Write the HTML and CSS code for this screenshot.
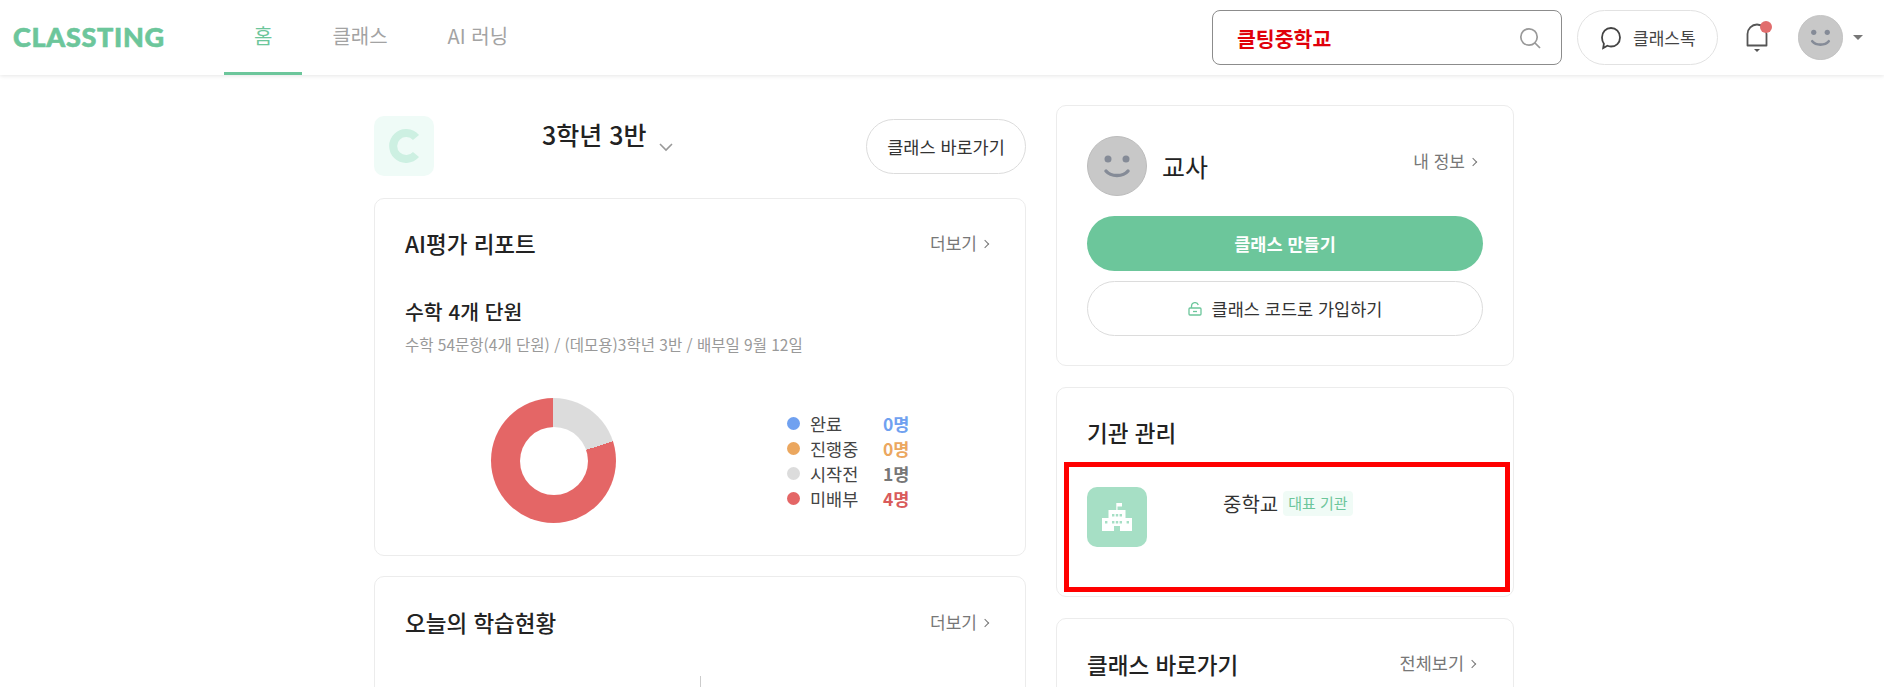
FILE: index.html
```html
<!DOCTYPE html>
<html lang="ko">
<head>
<meta charset="utf-8">
<title>Classting</title>
<link rel="stylesheet" href="styles.css">
</head>
<body>
<header class="topbar">
  <div class="logo">CLASSTING</div>
  <nav class="tabs">
    <a class="tab tab-active">홈</a>
    <a class="tab">클래스</a>
    <a class="tab">AI 러닝</a>
  </nav>
  <div class="top-actions">
    <div class="search">
      <span class="search-text">클팅중학교</span>
      <svg class="search-icon" width="22" height="22" viewBox="0 0 22 22" fill="none" stroke="#999" stroke-width="1.7"><circle cx="10" cy="10" r="8.2"/><path d="M16 16l5 5"/></svg>
    </div>
    <div class="talk">
      <svg width="22" height="24" viewBox="0 0 22 24" fill="none" stroke="#444" stroke-width="1.8"><path d="M11 2c5 0 9 4 9 9.500s-4 9-9 9c-1.300 0-2.500-.2-3.600-.7L3.200 22l.7-4.300C2.700 16 2 14 2 11.500 2 6 6 2 11 2z"/></svg>
      <span>클래스톡</span>
    </div>
    <div class="bell">
      <svg width="26" height="30" viewBox="0 0 26 30" fill="none" stroke="#555" stroke-width="1.800"><path d="M3.500 22.500h19V11a9.500 9.500 0 0 0-19 0z" stroke-linejoin="round"/><path d="M10 26h6l-3 3z" fill="#555" stroke="none"/></svg>
      <span class="bell-dot"></span>
    </div>
    <svg class="avatar-small" width="45" height="45" viewBox="0 0 60 60"><circle cx="30" cy="30" r="29.500" fill="#c8c8c8" stroke="#bcbcbc"/><circle cx="21" cy="23" r="3.500" fill="#858b97"/><circle cx="39" cy="23" r="3.500" fill="#858b97"/><path d="M19 35c5 6 17 6 22 0" fill="none" stroke="#858b97" stroke-width="3.500" stroke-linecap="round"/></svg>
    <span class="caret"></span>
  </div>
</header>

<main class="page">
  <section class="col-left">
    <div class="class-head">
      <div class="class-tile">
        <svg width="32" height="34" viewBox="0 0 32 34" fill="none" stroke="#cdf0e2" stroke-width="8"><path d="M28 8.500a13 13 0 1 0 0 17"/></svg>
      </div>
      <h1 class="class-title">3학년 3반</h1>
      <svg class="class-chevron" width="14" height="9" viewBox="0 0 14 9" fill="none" stroke="#999" stroke-width="1.600"><path d="M1 1l6 6 6-6"/></svg>
      <button class="pill-btn">클래스 바로가기</button>
    </div>

    <article class="card card-report">
      <div class="card-top">
        <h2 class="card-heading">AI평가 리포트</h2>
        <a class="more">더보기<i class="chev"></i></a>
      </div>
      <h3 class="sub-heading">수학 4개 단원</h3>
      <p class="meta">수학 54문항(4개 단원) / (데모용)3학년 3반 / 배부일 9월 12일</p>
      <div class="chart-row">
        <div class="donut"></div>
        <ul class="legend">
          <li class="legend-row"><span class="dot dot-blue"></span><span class="legend-label">완료</span><b class="val-blue">0명</b></li>
          <li class="legend-row"><span class="dot dot-orange"></span><span class="legend-label">진행중</span><b class="val-orange">0명</b></li>
          <li class="legend-row"><span class="dot dot-grey"></span><span class="legend-label">시작전</span><b class="val-grey">1명</b></li>
          <li class="legend-row"><span class="dot dot-red"></span><span class="legend-label">미배부</span><b class="val-red">4명</b></li>
        </ul>
      </div>
    </article>

    <article class="card card-today">
      <div class="card-top">
        <h2 class="card-heading">오늘의 학습현황</h2>
        <a class="more">더보기<i class="chev"></i></a>
      </div>
      <div class="axis-line"></div>
    </article>
  </section>

  <aside class="col-right">
    <article class="card card-profile">
      <div class="profile-row">
        <svg width="60" height="60" viewBox="0 0 60 60"><circle cx="30" cy="30" r="29.500" fill="#c8c8c8" stroke="#bcbcbc"/><circle cx="21" cy="23" r="3.500" fill="#858b97"/><circle cx="39" cy="23" r="3.500" fill="#858b97"/><path d="M19 35c5 6 17 6 22 0" fill="none" stroke="#858b97" stroke-width="3.500" stroke-linecap="round"/></svg>
        <span class="profile-name">교사</span>
        <a class="more more-profile">내 정보<i class="chev"></i></a>
      </div>
      <button class="btn-primary">클래스 만들기</button>
      <button class="btn-outline">
        <svg width="14" height="14" viewBox="0 0 14 14" fill="none" stroke="#6cc69b" stroke-width="1.300"><rect x="1" y="6" width="12" height="7" rx="1"/><path d="M3.500 6V4a3.500 3.500 0 0 1 6.800-1"/><path d="M5 9.500h4"/></svg>
        <span>클래스 코드로 가입하기</span>
      </button>
    </article>

    <article class="card card-inst">
      <h2 class="card-heading">기관 관리</h2>
      <div class="inst-box">
        <div class="inst-icon">
          <svg width="30" height="28" viewBox="0 0 30 28" fill="#fff"><path fill-rule="evenodd" d="M14.300 0H20v3.500h-4.500V7H23.500v8H30v13H18v-5h-6v5H0V15h6.500V7h7.800z M3 18h2.400v2.400H3z M10 11h2.400v2.400H10z M13.800 11h2.400v2.400h-2.400z M17.600 11H20v2.400h-2.400z M10 18h2.400v2.400H10z M13.800 18h2.400v2.400h-2.400z M17.600 18H20v2.400h-2.400z M24.600 18H27v2.400h-2.400z"/></svg>
        </div>
        <div class="inst-info">
          <span class="inst-name">중학교</span>
          <span class="badge">대표 기관</span>
        </div>
      </div>
    </article>

    <article class="card card-shortcut">
      <div class="card-top card-top-short">
        <h2 class="card-heading card-heading-lg">클래스 바로가기</h2>
        <a class="more more-all">전체보기<i class="chev"></i></a>
      </div>
    </article>
  </aside>
</main>
</body>
</html>
```

FILE: styles.css
```css
* { box-sizing: border-box; }
html, body { margin: 0; padding: 0; height: 687px; overflow: hidden; background: #fff; }
body { font-family: "Noto Sans CJK KR", "Noto Sans", sans-serif; color: #222; }
h1, h2, h3, p, ul { margin: 0; padding: 0; }
ul { list-style: none; }
button { font-family: inherit; cursor: pointer; }

/* Top bar */
.topbar {
  display: flex; align-items: stretch; height: 75px; padding-left: 13px;
  background: #fff; box-shadow: 0 1px 4px rgba(0,0,0,.1);
}
.logo {
  width: 211px; font-family: Lato, sans-serif; font-weight: 900; font-size: 27px;
  line-height: 74px; letter-spacing: .7px; color: #6cc69b; -webkit-text-stroke: .6px #6cc69b;
}
.tabs { display: flex; }
.tab {
  padding: 0 30px; line-height: 72px; height: 75px; font-size: 20px; color: #a3a3a3;
  border-bottom: 3px solid transparent;
}
.tab-active { color: #6cc69b; border-bottom-color: #6cc69b; }
.top-actions { display: flex; align-items: center; margin-left: auto; padding-right: 21px; }
.search {
  display: flex; align-items: center; justify-content: space-between;
  width: 350px; height: 55px; padding: 0 20px 0 24px;
  border: 1px solid #8c8c8c; border-radius: 8px;
}
.search-text { font-size: 20.500px; font-weight: 700; color: #e0000a; }
.talk {
  display: flex; align-items: center; gap: 11px; width: 141px; height: 55px; margin-left: 15px;
  padding-left: 22px; border: 1px solid #e2e2e2; border-radius: 28px; font-size: 17px; color: #444;
}
.bell { position: relative; width: 26px; height: 30px; margin-left: 26px; }
.bell-dot {
  position: absolute; top: -2px; right: -2px; width: 12px; height: 12px;
  border-radius: 50%; background: #e16d6d;
}
.avatar-small { margin-left: 28px; }
.caret {
  width: 0; height: 0; margin-left: 10px; border: 5px solid transparent; border-bottom: 0;
  border-top-color: #777;
}

/* Page */
.page { display: flex; gap: 30px; height: 612px; padding: 30px 0 0 374px; overflow: hidden; }
.col-left { width: 652px; flex: none; }
.col-right { width: 458px; flex: none; }
.card { border: 1px solid #ececec; border-radius: 10px; background: #fff; }
.card-top { display: flex; justify-content: space-between; }
.card-heading { font-size: 22.500px; line-height: 26px; font-weight: 500; color: #222; }
.more { margin-top: 1px; font-size: 17px; line-height: 24px; color: #777; white-space: nowrap; }
.chev {
  display: inline-block; width: 6px; height: 6px; margin-left: 5px; margin-right: 1px; vertical-align: 3px;
  border-top: 1.500px solid #777; border-right: 1.500px solid #777; transform: rotate(45deg);
}

/* Class head */
.class-head { display: flex; align-items: flex-start; margin: 11px 0 22px; height: 60px; }
.class-tile {
  display: flex; align-items: center; justify-content: center; width: 60px; height: 60px;
  border-radius: 10px; background: #effbf7;
}
.class-title { margin: 2px 0 0 108px; font-size: 25px; line-height: 32px; font-weight: 500; color: #222; }
.class-chevron { margin: 27px 0 0 12px; }
.pill-btn {
  width: 160px; height: 55px; margin: 3px 0 0 auto; padding: 0; background: #fff;
  border: 1px solid #dcdcdc; border-radius: 28px; font-size: 17.500px; color: #333;
}

/* Report card */
.card-report { height: 358px; margin-bottom: 20px; padding: 31px 36px 0 30px; }
.sub-heading { margin-top: 41px; font-size: 20.500px; line-height: 28px; font-weight: 500; }
.meta { margin-top: 9px; font-size: 15.500px; line-height: 20px; color: #999; }
.chart-row { display: flex; align-items: center; margin: 44px 0 0 86px; }
.donut {
  position: relative; width: 125px; height: 125px; border-radius: 50%;
  background: conic-gradient(#dcdcdc 0 72deg, #e46666 72deg 360deg);
}
.donut::after {
  content: ""; position: absolute; inset: 28.500px; border-radius: 50%; background: #fff;
}
.legend { margin-left: 171px; }
.legend-row { display: flex; align-items: center; height: 25px; font-size: 17.500px; }
.dot { width: 13px; height: 13px; border-radius: 50%; }
.dot-blue { background: #70a1f0; }
.dot-orange { background: #eba75f; }
.dot-grey { background: #dcdcdc; }
.dot-red { background: #e46666; }
.legend-label { width: 73px; margin-left: 10px; color: #444; }
.legend-row b { font-weight: 700; }
.val-blue { color: #70a1f0; }
.val-orange { color: #eba75f; }
.val-grey { color: #777; }
.val-red { color: #d95b5b; }

/* Today card */
.card-today { height: 300px; padding: 32px 36px 0 30px; }
.axis-line { width: 1px; height: 60px; margin: 41px 0 0 295px; background: #ccc; }

/* Right column */
.card-profile { height: 261px; margin-bottom: 21px; padding: 30px 29px 0 30px; }
.profile-row { display: flex; align-items: center; height: 60px; }
.profile-name { margin-left: 15px; font-size: 25px; color: #222; }
.more-profile { margin: -10px 7px 0 auto; }
.btn-primary {
  display: block; width: 396px; height: 55px; margin-top: 20px; border: 0; border-radius: 28px;
  background: #6cc69b; color: #fff; font-size: 17.500px; font-weight: 700;
}
.btn-outline {
  display: flex; align-items: center; justify-content: center; gap: 10px;
  width: 396px; height: 55px; margin-top: 10px; background: #fff;
  border: 1px solid #dcdcdc; border-radius: 28px; color: #333; font-size: 17.500px;
}
.card-inst { height: 210px; margin-bottom: 21px; padding: 31px 30px 0 30px; }
.inst-box {
  display: flex; align-items: flex-start; height: 130px; margin: 17px -27px 0 -23px;
  padding: 20px 18px 0; border: 5px solid #f00;
}
.inst-icon {
  display: flex; align-items: center; justify-content: center; width: 60px; height: 60px;
  flex: none; border-radius: 10px; background: #a6dfc5;
}
.inst-info { display: flex; align-items: center; gap: 5px; height: 25px; margin: 4px 0 0 76px; }
.inst-name { font-size: 20px; color: #333; }
.badge {
  height: 25px; padding: 0 5px; border-radius: 4px; background: #f0fbf6;
  font-size: 15px; line-height: 24px; color: #6cc69b;
}
.card-shortcut { height: 200px; padding: 31px 37px 0 30px; }
.card-heading-lg { line-height: 28px; }
.more-all { font-size: 17.500px; margin-top: 1px; }
```
